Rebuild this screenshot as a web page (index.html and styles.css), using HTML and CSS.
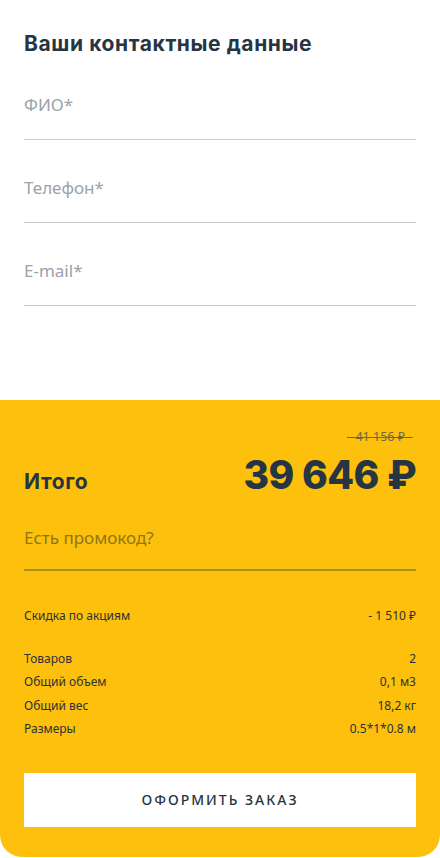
FILE: index.html
```html
<!DOCTYPE html>
<html lang="ru">
<head>
<meta charset="utf-8">
<title>Оформление заказа</title>
<link rel="stylesheet" href="styles.css">
</head>
<body>
<div class="page">
  <section class="contacts">
    <h2 class="contacts__title">Ваши контактные данные</h2>
    <label class="field"><input class="field__input" type="text" placeholder="ФИО*"></label>
    <label class="field"><input class="field__input" type="tel" placeholder="Телефон*"></label>
    <label class="field"><input class="field__input" type="email" placeholder="E-mail*"></label>
  </section>

  <section class="summary">
    <div class="summary__old"><span class="old-price">41 156 ₽</span></div>
    <div class="summary__total">
      <span class="summary__label">Итого</span>
      <span class="summary__price">39 646 ₽</span>
    </div>
    <label class="promo"><input class="promo__input" type="text" placeholder="Есть промокод?"></label>

    <div class="rows rows--discount">
      <div class="row"><span>Скидка по акциям</span><span>- 1 510 ₽</span></div>
    </div>
    <div class="rows rows--info">
      <div class="row"><span>Товаров</span><span>2</span></div>
      <div class="row"><span>Общий объем</span><span>0,1 м3</span></div>
      <div class="row"><span>Общий вес</span><span>18,2 кг</span></div>
      <div class="row"><span>Размеры</span><span>0.5*1*0.8 м</span></div>
    </div>

    <button class="submit" type="button">ОФОРМИТЬ ЗАКАЗ</button>
  </section>
</div>
</body>
</html>
```

FILE: styles.css
```css
* { box-sizing: border-box; }

html, body {
  margin: 0;
  padding: 0;
  background: #ffffff;
}

body {
  font-family: "Noto Sans", "Open Sans", sans-serif;
  color: #263543;
}

.page {
  width: 440px;
}

.contacts {
  padding: 30px 24px 94px;
}

.contacts__title {
  margin: 0;
  font-family: Inter, "Noto Sans", sans-serif;
  font-weight: 700;
  font-size: 21px;
  line-height: 27px;
  color: #263543;
  letter-spacing: 0.6px;
}

.field {
  display: block;
  border-bottom: 1px solid #c9ccd0;
  padding: 37px 0 23px;
}

.field__input,
.promo__input {
  display: block;
  width: 100%;
  border: 0;
  padding: 0;
  margin: 0;
  background: transparent;
  outline: none;
  font-family: "Noto Sans", "Open Sans", sans-serif;
  font-size: 17px;
  line-height: 22px;
  height: 22px;
  color: #263543;
}

.field__input::placeholder {
  color: #9aa2aa;
  opacity: 1;
}

.summary {
  background: #fdc00c;
  border-radius: 0 0 22px 22px;
  padding: 28px 24px 30px;
}

.summary__old {
  display: flex;
  justify-content: flex-end;
  line-height: 18px;
  height: 18px;
}

.old-price {
  font-size: 12.5px;
  color: #6f6a3d;
  padding: 0 8px;
  margin-right: 3px;
  background: linear-gradient(#6f6a3d, #6f6a3d) center 55% / 100% 1px no-repeat;
}

.summary__total {
  display: flex;
  justify-content: space-between;
  align-items: baseline;
  margin-top: 7px;
  height: 44px;
}

.summary__label {
  font-family: Inter, "Noto Sans", sans-serif;
  font-weight: 700;
  font-size: 21px;
  letter-spacing: 0.6px;
  color: #263543;
}

.summary__price {
  font-family: Inter, "Noto Sans", sans-serif;
  font-weight: 800;
  font-size: 39px;
  line-height: 44px;
  letter-spacing: -0.5px;
  color: #263543;
}

.promo {
  display: block;
  padding: 30px 0 20px;
  border-bottom: 2px solid #b0900f;
}

.promo__input::placeholder {
  color: #8f7612;
  opacity: 1;
}

.rows {
  font-size: 12px;
  color: #2c3136;
}

.rows--discount {
  margin-top: 36px;
}

.rows--info {
  margin-top: 22px;
}

.row {
  display: flex;
  justify-content: space-between;
  line-height: 18px;
  height: 18px;
}

.rows--info .row {
  height: 23.4px;
  line-height: 23.4px;
}

.submit {
  display: block;
  width: 100%;
  height: 54px;
  margin-top: 32px;
  border: 0;
  background: #ffffff;
  font-family: "Noto Sans", "Open Sans", sans-serif;
  font-size: 14px;
  font-weight: 500;
  letter-spacing: 2px;
  color: #263543;
  cursor: pointer;
}
```
